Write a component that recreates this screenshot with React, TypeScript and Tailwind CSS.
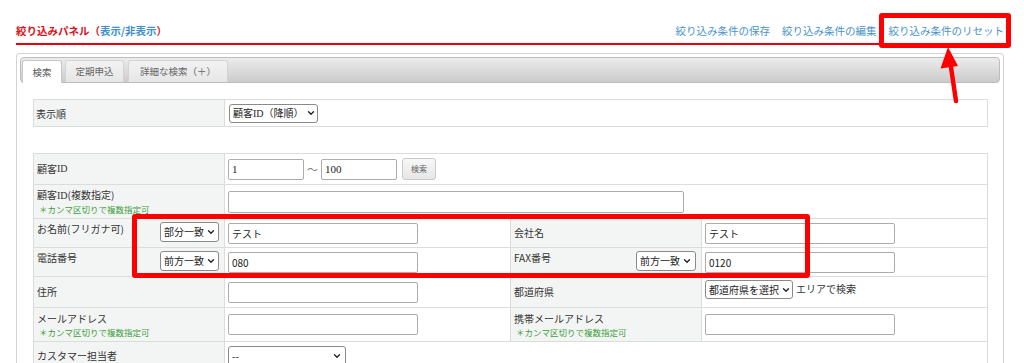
import { ChevronDown } from "lucide-react";

const labelCell = "flex border-r border-b border-[#dcdcdc] bg-[#f3f4f4] pl-[3px]";
const valueCell = "flex border-r border-b border-[#dcdcdc] bg-white pl-[3px]";

function Select({ text, className }: { text: React.ReactNode; className: string }) {
  return (
    <div
      className={`flex shrink-0 items-center justify-between gap-[2px] overflow-hidden rounded-[3px] border border-[#8a8a8a] bg-white pl-[3px] pr-[3px] text-[10px] leading-none whitespace-nowrap text-[#222] ${className}`}
    >
      <span className="shrink-0 whitespace-nowrap">{text}</span>
      <ChevronDown size={10} strokeWidth={3.2} className="shrink-0 text-[#222]" />
    </div>
  );
}

function Field({ value = "", className }: { value?: string; className: string }) {
  return (
    <input
      readOnly
      value={value}
      className={`shrink-0 rounded-[2px] border border-[#acacac] bg-white px-[3px] text-[10px] leading-none text-[#222] outline-none ${className}`}
    />
  );
}

function Note() {
  return <div className="pl-[2px] text-[8.5px] leading-[12px] text-[#3c9f3c]">＊カンマ区切りで複数指定可</div>;
}

export default function App() {
  return (
    <div className="relative h-[363px] w-[1024px] overflow-hidden bg-white font-['Noto_Sans_CJK_JP','Noto_Sans',sans-serif] text-[#333]">
      {/* header */}
      <div className="ml-[16px] mr-[20px] flex items-end justify-between border-b-2 border-[#e60012] pt-[23px] pb-[4px]">
        <h2 className="text-[10.5px] font-bold leading-[16px] text-[#dd1020]">
          絞り込みパネル（<span className="text-[#3e8fcb]">表示/非表示</span>）
        </h2>
        <div className="flex gap-[12px] text-[10.5px] leading-[16px] text-[#4a94c9]">
          <a>絞り込み条件の保存</a>
          <a>絞り込み条件の編集</a>
          <a>絞り込み条件のリセット</a>
        </div>
      </div>

      {/* panel */}
      <div className="mt-[8px] ml-[16px] h-[400px] w-[988px] rounded-[3px] border border-[#d3d3d3] p-[3px]">
        <div className="flex h-[26px] items-end gap-[3px] rounded-[4px] border border-[#bdbdbd] bg-linear-to-b from-[#ececec] to-[#cbcbcb] pl-[1px]">
          <div className="-mb-px flex h-[23px] w-[40px] items-center justify-center rounded-t-[3px] border border-b-0 border-[#c8c8c8] bg-white text-[9.5px] text-[#555]">
            検索
          </div>
          <div className="flex h-[22px] w-[59px] items-center justify-center rounded-t-[3px] border border-b-0 border-[#d4d4d4] bg-linear-to-b from-[#f2f2f2] to-[#e6e6e6] text-[9.5px] text-[#666]">
            定期申込
          </div>
          <div className="ml-px flex h-[22px] w-[100px] items-center justify-center rounded-t-[3px] border border-b-0 border-[#d4d4d4] bg-linear-to-b from-[#f2f2f2] to-[#e6e6e6] text-[9.5px] text-[#666]">
            詳細な検索（＋）
          </div>
        </div>

        <div className="ml-[13px] pt-[16px]">
          {/* sort order */}
          <div className="grid h-[28px] w-[955px] grid-cols-[191px_1fr] border border-[#dcdcdc]">
            <div className="flex items-center border-r border-[#dcdcdc] bg-[#f3f4f4] pl-[2px] text-[10px]">表示順</div>
            <div className="flex items-center pl-[4px]">
              <Select
                className="h-[19px] w-[89px]"
                text={
                  <>
                    顧客<span className="font-['Liberation_Serif',serif]">ID</span>（降順）
                  </>
                }
              />
            </div>
          </div>

          {/* conditions */}
          <div className="mt-[26px] grid w-[955px] grid-cols-[191px_286px_191px_286px] border-t border-l border-[#dcdcdc] text-[10px] leading-[14px]">
            {/* row 1 */}
            <div className={`${labelCell} h-[31px] items-center`}>
              顧客<span className="font-['Liberation_Serif',serif]">ID</span>
            </div>
            <div className={`${valueCell} col-span-3 items-center`}>
              <input
                readOnly
                value="1"
                className="h-[21px] w-[76px] rounded-[2px] border border-[#acacac] px-[3px] font-['Liberation_Serif',serif] text-[11px] text-[#222] outline-none"
              />
              <span className="w-[17px] text-center text-[11px] text-[#777]">～</span>
              <input
                readOnly
                value="100"
                className="h-[21px] w-[76px] rounded-[2px] border border-[#acacac] px-[3px] font-['Liberation_Serif',serif] text-[11px] text-[#222] outline-none"
              />
              <div className="ml-[5px] flex h-[22px] w-[34px] items-center justify-center rounded-[3px] border border-[#cacaca] bg-linear-to-b from-[#f8f8f8] to-[#e6e6e6] text-[8px] text-[#666]">
                検索
              </div>
            </div>

            {/* row 2 */}
            <div className={`${labelCell} h-[34px] flex-col justify-center`}>
              <div>
                顧客<span className="font-['Liberation_Serif',serif]">ID</span>(複数指定)
              </div>
              <Note />
            </div>
            <div className={`${valueCell} col-span-3 items-center`}>
              <Field className="h-[22px] w-[456px]" />
            </div>

            {/* row 3 */}
            <div className={`${labelCell} h-[29px] items-start justify-between pr-[5px]`}>
              <span className="pt-[3px]">お名前(フリガナ可)</span>
              <Select className="mt-[3px] h-[20px] w-[59px]" text="部分一致" />
            </div>
            <div className={`${valueCell} items-center`}>
              <Field value="テスト" className="h-[21px] w-[190px]" />
            </div>
            <div className={`${labelCell} items-center`}>会社名</div>
            <div className={`${valueCell} items-center`}>
              <Field value="テスト" className="h-[21px] w-[190px]" />
            </div>

            {/* row 4 */}
            <div className={`${labelCell} h-[29px] items-start justify-between pr-[5px]`}>
              <span className="pt-[3px]">電話番号</span>
              <Select className="mt-[3px] h-[20px] w-[59px]" text="前方一致" />
            </div>
            <div className={`${valueCell} items-center`}>
              <Field value="080" className="h-[21px] w-[190px]" />
            </div>
            <div className={`${labelCell} items-start justify-between pr-[5px]`}>
              <span className="pt-[3px]">FAX番号</span>
              <Select className="mt-[3px] h-[20px] w-[60px]" text="前方一致" />
            </div>
            <div className={`${valueCell} items-center`}>
              <Field value="0120" className="h-[21px] w-[190px]" />
            </div>

            {/* row 5 */}
            <div className={`${labelCell} h-[31px] items-center`}>住所</div>
            <div className={`${valueCell} items-center`}>
              <Field className="h-[21px] w-[190px]" />
            </div>
            <div className={`${labelCell} items-center`}>都道府県</div>
            <div className={`${valueCell} items-start pt-[3px]`}>
              <Select className="h-[19px] w-[88px]" text="都道府県を選択" />
              <span className="ml-[3px] leading-[18px]">エリアで検索</span>
            </div>

            {/* row 6 */}
            <div className={`${labelCell} h-[34px] flex-col justify-center`}>
              <div>メールアドレス</div>
              <Note />
            </div>
            <div className={`${valueCell} items-center`}>
              <Field className="h-[21px] w-[190px]" />
            </div>
            <div className={`${labelCell} flex-col justify-center`}>
              <div>携帯メールアドレス</div>
              <Note />
            </div>
            <div className={`${valueCell} items-center`}>
              <Field className="h-[21px] w-[190px]" />
            </div>

            {/* row 7 */}
            <div className={`${labelCell} h-[28px] items-center`}>カスタマー担当者</div>
            <div className={`${valueCell} col-span-3 items-center`}>
              <Select className="h-[20px] w-[118px]" text="--" />
            </div>
          </div>
        </div>
      </div>

      {/* annotations */}
      <div className="absolute top-[13px] left-[879px] h-[35px] w-[132px] rounded-[3px] border-[5px] border-[#ff0000]" />
      <div className="absolute top-[214px] left-[132px] h-[64px] w-[678px] rounded-[3px] border-[5px] border-[#ff0000]" />
      <svg className="absolute top-0 left-0" width="1024" height="363" viewBox="0 0 1024 363">
        <line x1="956" y1="101" x2="950.5" y2="64" stroke="#ff0000" strokeWidth="4.5" strokeLinecap="round" />
        <polygon points="948,47 940.5,68.5 958,66" fill="#ff0000" />
      </svg>
    </div>
  );
}
